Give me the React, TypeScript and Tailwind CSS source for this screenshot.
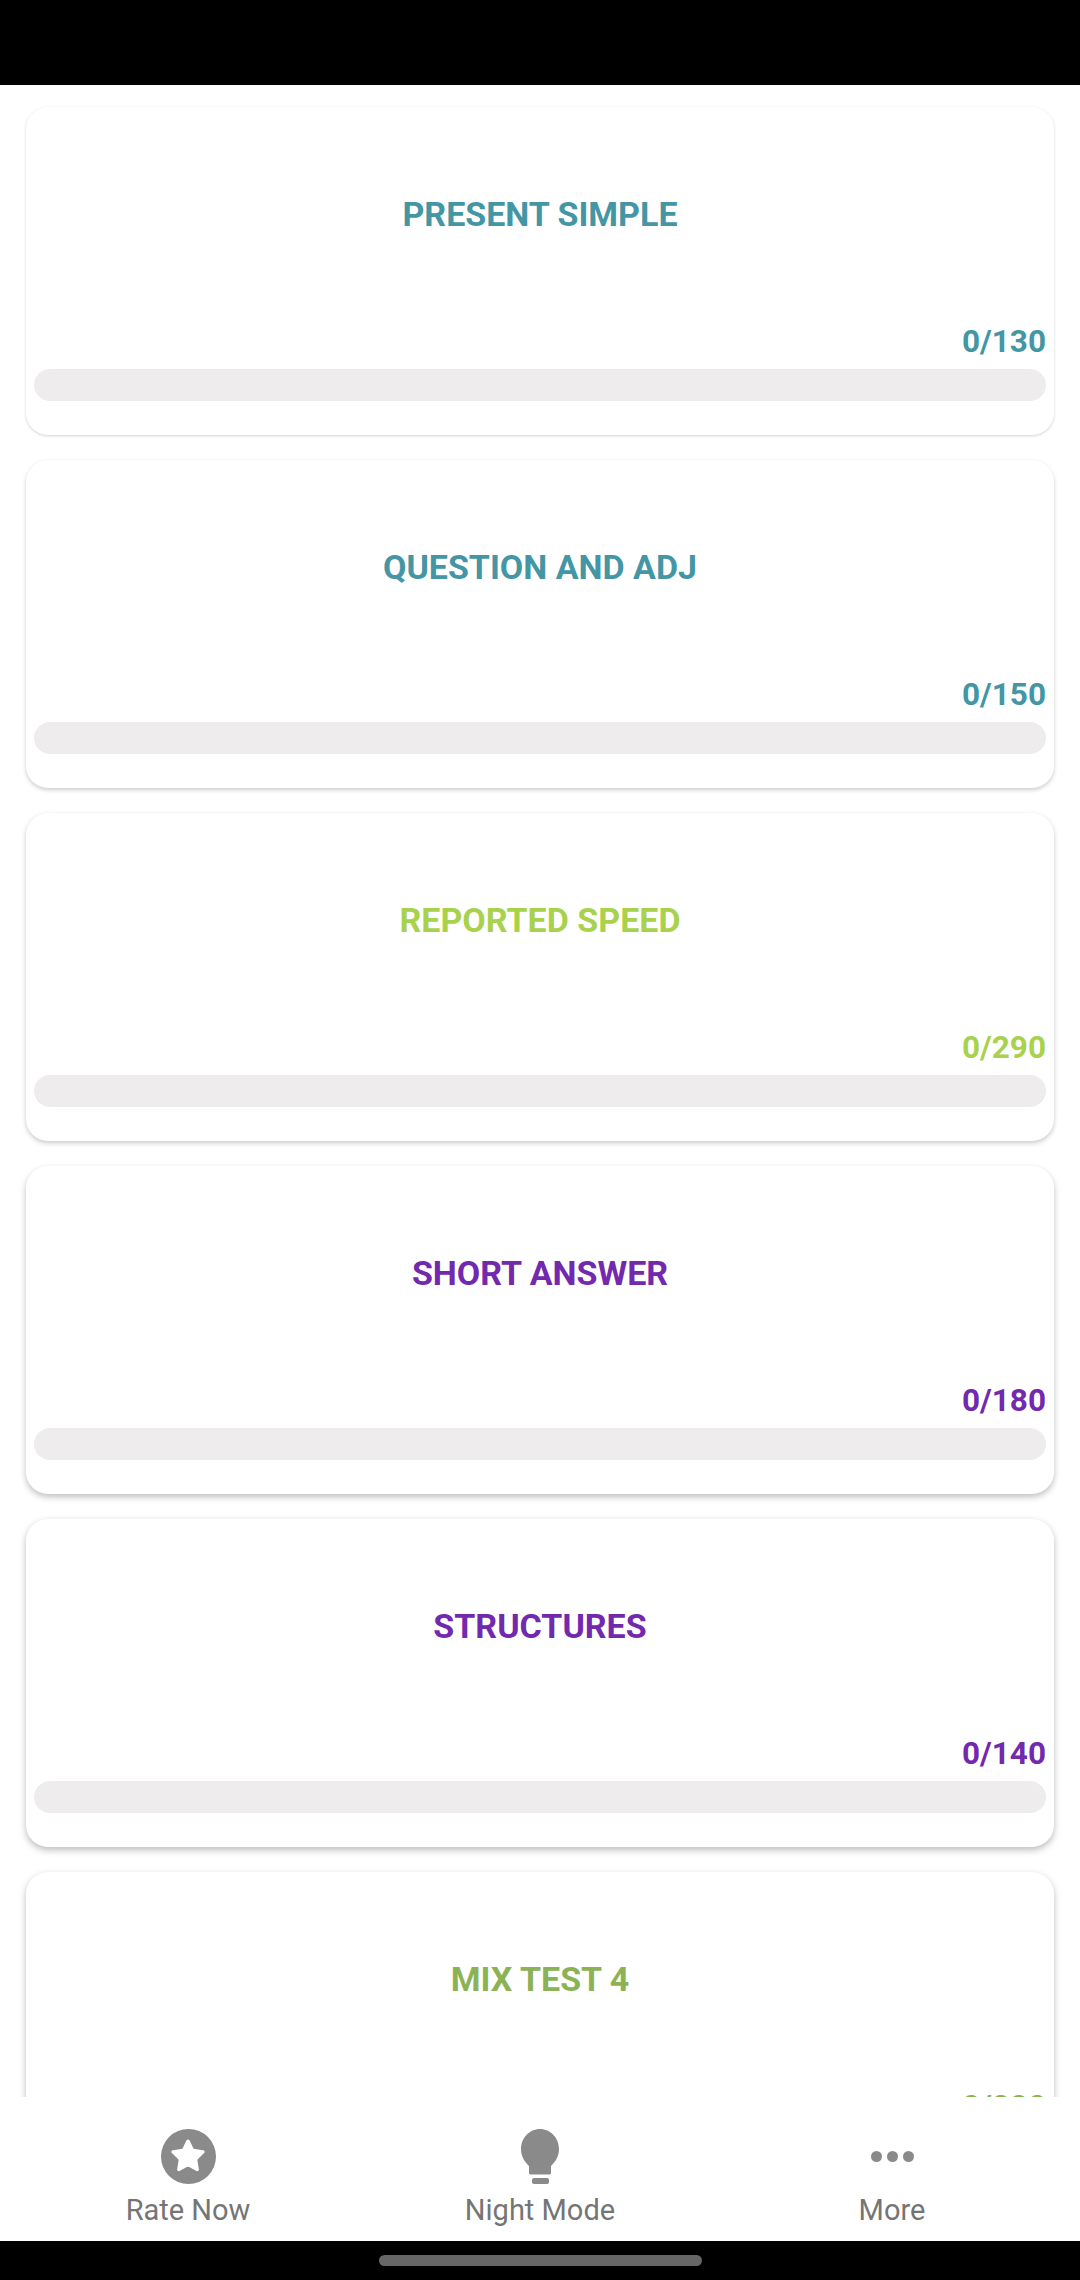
import { Star } from "lucide-react";

const topics = [
  { title: "PRESENT SIMPLE", count: "0/130", color: "text-[#4496a4]", shadow: "shadow-[0_1px_3px_rgba(0,0,0,0.18)]" },
  { title: "QUESTION AND ADJ", count: "0/150", color: "text-[#4496a4]", shadow: "shadow-[0_2px_4px_rgba(0,0,0,0.2)]" },
  { title: "REPORTED SPEED", count: "0/290", color: "text-[#a9d24c]", shadow: "shadow-[0_2px_5px_rgba(0,0,0,0.22)]" },
  { title: "SHORT ANSWER", count: "0/180", color: "text-[#7229ae]", shadow: "shadow-[0_3px_6px_rgba(0,0,0,0.25)]" },
  { title: "STRUCTURES", count: "0/140", color: "text-[#7229ae]", shadow: "shadow-[0_3px_7px_rgba(0,0,0,0.27)]" },
  { title: "MIX TEST 4", count: "0/280", color: "text-[#8bb356]", shadow: "shadow-[0_3px_7px_rgba(0,0,0,0.27)]" },
];

function TopicCard({ title, count, color, shadow }: (typeof topics)[number]) {
  return (
    <div className={`bg-white rounded-[22px] h-[328px] shrink-0 px-2 flex flex-col ${shadow}`}>
      <div className={`h-[216px] pb-[2px] shrink-0 flex items-center justify-center text-[34px] font-bold ${color}`}>
        {title}
      </div>
      <div className={`text-right text-[31.500px] font-bold leading-[38px] ${color}`}>{count}</div>
      <div className="h-[32px] mt-[8px] rounded-full bg-[#eeecec]" />
    </div>
  );
}

function NavItem({ label, icon }: { label: string; icon: React.ReactNode }) {
  return (
    <div className="flex-1 flex flex-col items-center">
      <div className="h-[56px] flex items-center justify-center">{icon}</div>
      <span className="text-[29px] leading-[34px] mt-[9px] text-[#757575]">{label}</span>
    </div>
  );
}

export default function App() {
  return (
    <div className="w-[1080px] h-[2280px] flex flex-col bg-white font-['Roboto',sans-serif] overflow-hidden">
      <div className="h-[85px] shrink-0 bg-black" />

      <div className="h-[2012px] shrink-0 overflow-hidden px-[26px] pt-[22px] flex flex-col gap-[25px]">
        {topics.map((t) => (
          <TopicCard key={t.title} {...t} />
        ))}
      </div>

      <div className="flex-1 flex pt-[31px] px-[12px]">
        <NavItem
          label="Rate Now"
          icon={
            <div className="w-[55px] h-[55px] rounded-full bg-[#8a8a8a] flex items-center justify-center">
              <Star size={38} fill="white" stroke="white" strokeWidth={1} />
            </div>
          }
        />
        <NavItem
          label="Night Mode"
          icon={
            <svg width="38" height="55" viewBox="0 0 38 55" fill="#8a8a8a">
              <path d="M19 0C8.500 0 0 9 0 20c0 8 4 13 8 17v7c0 1 1 1.500 2 1.500h18c1 0 2-.5 2-1.500v-7c4-4 8-9 8-17C38 9 29.500 0 19 0z" />
              <rect x="11" y="49" width="17" height="6" rx="2" />
            </svg>
          }
        />
        <NavItem
          label="More"
          icon={
            <div className="flex gap-[5px]">
              <div className="w-[11px] h-[11px] rounded-full bg-[#8a8a8a]" />
              <div className="w-[11px] h-[11px] rounded-full bg-[#8a8a8a]" />
              <div className="w-[11px] h-[11px] rounded-full bg-[#8a8a8a]" />
            </div>
          }
        />
      </div>

      <div className="h-[39px] shrink-0 bg-black flex items-center justify-center">
        <div className="w-[323px] h-[11px] rounded-full bg-[#666666]" />
      </div>
    </div>
  );
}
